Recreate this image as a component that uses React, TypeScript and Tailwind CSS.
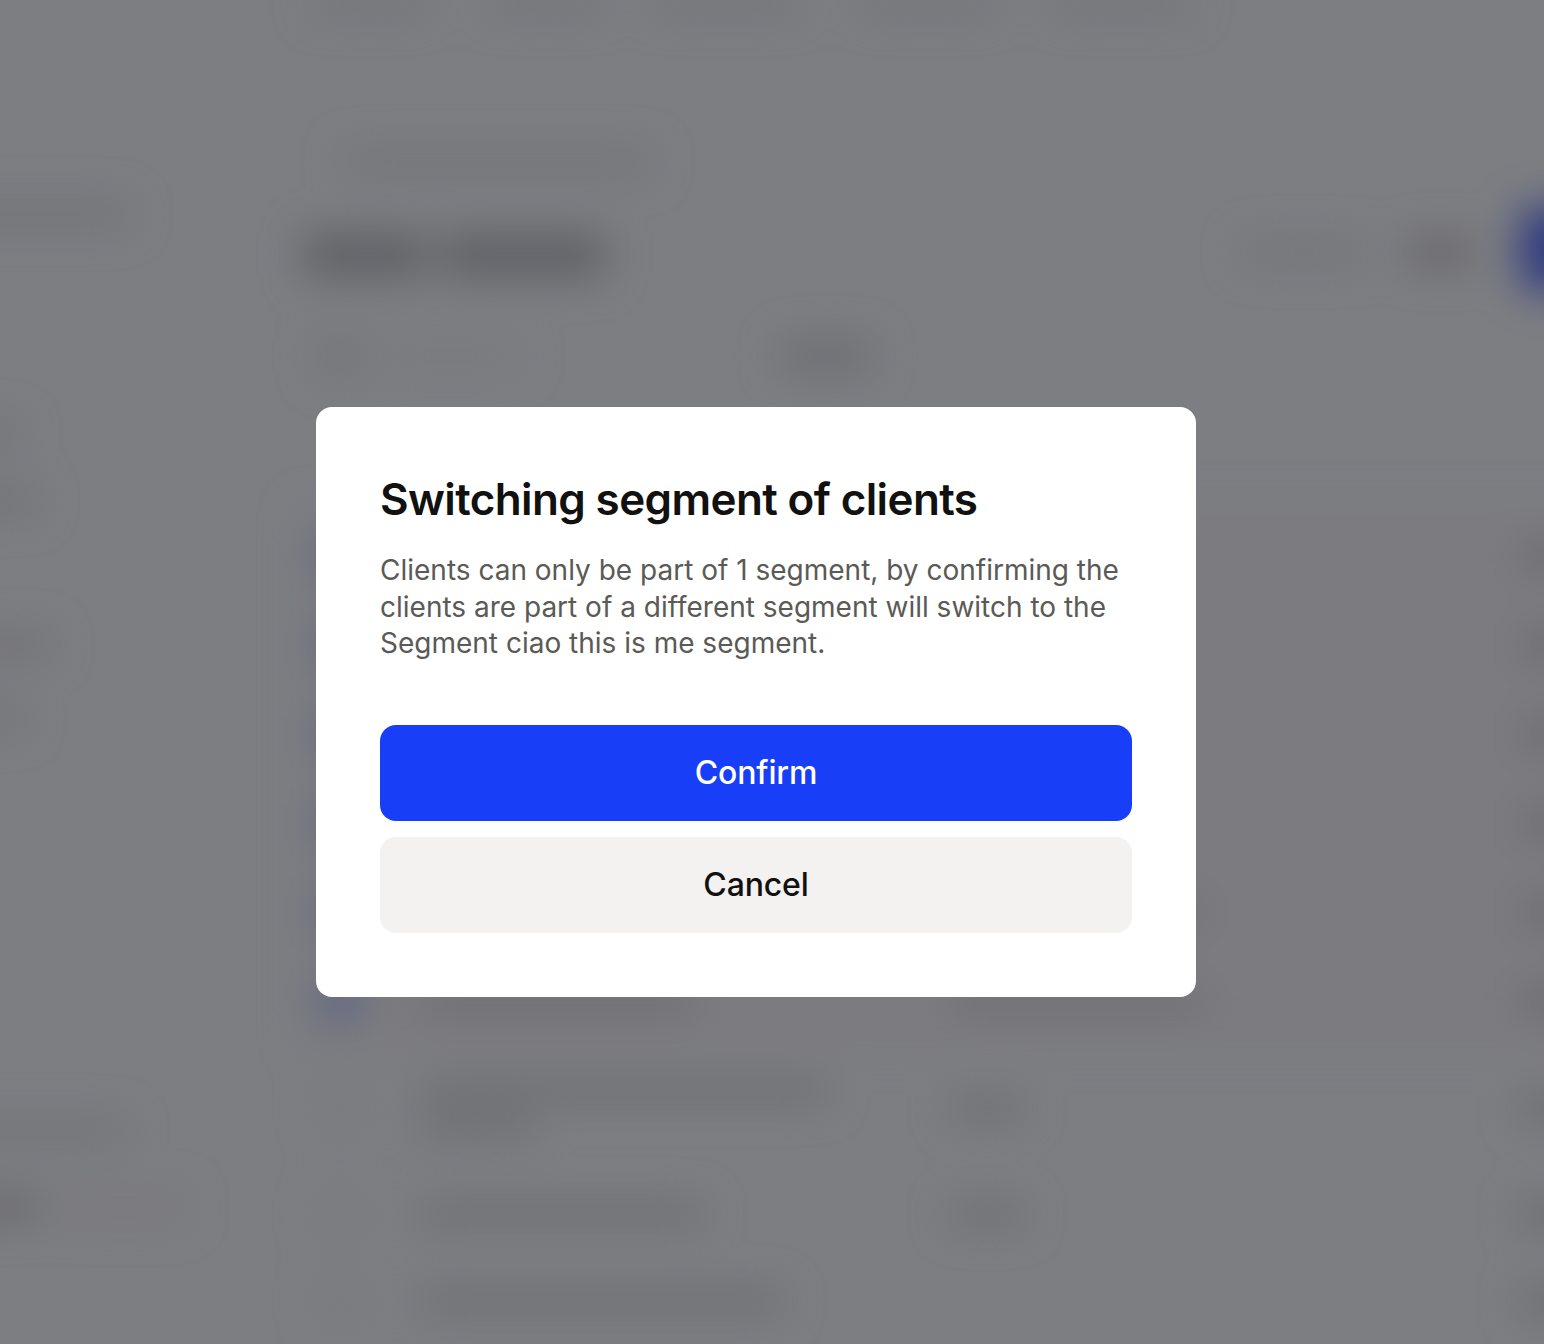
import { useState, type ReactNode } from "react";

interface BarProps {
  className: string;
}

interface TableRow {
  id: string;
  height: string;
  selected: boolean;
  name: string[];
  segment: string | null;
}

const SIDEBAR_ITEMS = [
  { id: "account", className: "mt-[204px] h-5 w-[208px] bg-[#6f7074]" },
  { id: "home", className: "mt-[201px] h-5 w-[98px] bg-[#6f7074]" },
  { id: "clients", className: "mt-[46px] h-5 w-[116px] bg-[#6d6e72]" },
  { id: "segments", className: "mt-[124px] h-5 w-[130px] bg-[#6f6e72]" },
  { id: "reports", className: "mt-[52px] h-5 w-[102px] bg-[#6f7074]" },
  { id: "settings", className: "mt-[394px] h-5 w-[205px] bg-[#707175]" },
];

const TABS = [
  { id: "tab-1", className: "ml-2 w-[116px]" },
  { id: "tab-2", className: "ml-[60px] w-[116px]" },
  { id: "tab-3", className: "ml-[48px] w-[148px]" },
  { id: "tab-4", className: "ml-[60px] w-[136px]" },
  { id: "tab-5", className: "ml-[56px] w-[140px]" },
];

const ROWS: TableRow[] = [
  { id: "r1", height: "h-[89px]", selected: true, name: ["w-[270px]"], segment: "w-[120px]" },
  { id: "r2", height: "h-[89px]", selected: true, name: ["w-[270px]"], segment: "w-[120px]" },
  { id: "r3", height: "h-[89px]", selected: true, name: ["w-[270px]"], segment: "w-[120px]" },
  { id: "r4", height: "h-[89px]", selected: true, name: ["w-[270px]"], segment: "w-[120px]" },
  { id: "r5", height: "h-[89px]", selected: true, name: ["w-[270px]"], segment: "w-[250px]" },
  { id: "r6", height: "h-[89px]", selected: true, name: ["w-[270px]"], segment: "w-[250px]" },
  { id: "r7", height: "h-[125px]", selected: false, name: ["w-[404px]", "w-[110px]"], segment: "w-[70px]" },
  { id: "r8", height: "h-[87px]", selected: false, name: ["w-[280px]"], segment: "w-[70px]" },
  { id: "r9", height: "h-[87px]", selected: false, name: ["w-[360px]"], segment: null },
];

function Bar({ className }: BarProps): ReactNode {
  return <div className={`shrink-0 ${className}`} />;
}

function Sidebar(): ReactNode {
  return (
    <div className="flex w-[384px] shrink-0 flex-col">
      {SIDEBAR_ITEMS.map((item) => (
        <Bar key={item.id} className={item.className} />
      ))}
      <div className="mt-[54px] flex">
        <Bar className="h-6 w-[120px] bg-[#67666a]" />
        <Bar className="ml-6 h-6 w-[120px] bg-[#7a787c]" />
      </div>
    </div>
  );
}

function Header(): ReactNode {
  return (
    <>
      <div className="flex h-[133px] items-start">
        {TABS.map((tab) => (
          <Bar key={tab.id} className={`h-2.5 bg-[#6a6b6f] ${tab.className}`} />
        ))}
      </div>
      <div className="flex h-[60px] items-center">
        <Bar className="ml-[42px] h-5 w-[304px] bg-[#717276]" />
      </div>
      <div className="flex h-[116px] items-center pt-2.5">
        <Bar className="h-11 w-[122px] bg-[#606165]" />
        <Bar className="ml-4 h-11 w-[162px] bg-[#606165]" />
        <Bar className="mb-1.5 ml-[640px] h-5 w-[120px] bg-[#717276]" />
        <Bar className="mb-1.5 ml-11 h-7 w-[66px] bg-[#68666a]" />
        <Bar className="mb-3 ml-[46px] h-[84px] w-[200px] rounded-2xl bg-[#303b80]" />
      </div>
      <div className="flex h-[95px] items-center pt-0.5">
        <Bar className="ml-4 h-9 w-10 bg-[#737478]" />
        <Bar className="ml-5 h-5 w-[140px] bg-[#7a7a7e]" />
        <Bar className="ml-[262px] h-7 w-[88px] bg-[#6a6b6f]" />
      </div>
    </>
  );
}

function ClientRow({ row }: { row: TableRow }): ReactNode {
  return (
    <div className={`flex items-center ${row.height} ${row.selected ? "bg-[#7c7b7f]" : ""}`}>
      <Bar className={`ml-4 size-10 rounded ${row.selected ? "bg-[#5c6584]" : "bg-[#7b7b7f]"}`} />
      <div className="ml-[62px] flex w-[530px] shrink-0 flex-col gap-4">
        {row.name.map((width) => (
          <Bar key={width} className={`h-5 bg-[#6a6b6f] ${width}`} />
        ))}
      </div>
      <div className="w-[570px] shrink-0">
        {row.segment ? <Bar className={`h-5 bg-[#6b6b6f] ${row.segment}`} /> : null}
      </div>
      <Bar className="h-6 w-[120px] bg-[#69696d]" />
    </div>
  );
}

function ClientsPage(): ReactNode {
  return (
    <div aria-hidden="true" className="-ml-20 flex h-full w-[1824px] blur-[20px]">
      <Sidebar />
      <div className="flex flex-1 flex-col">
        <Header />
        <div className="mt-[109px] flex flex-col">
          {ROWS.map((row) => (
            <ClientRow key={row.id} row={row} />
          ))}
        </div>
      </div>
    </div>
  );
}

interface ConfirmDialogProps {
  title: string;
  description: string;
  onConfirm: () => void;
  onCancel: () => void;
}

function ConfirmDialog({ title, description, onConfirm, onCancel }: ConfirmDialogProps): ReactNode {
  return (
    <div
      role="dialog"
      aria-modal="true"
      aria-labelledby="dialog-title"
      className="w-[880px] rounded-2xl bg-white p-16"
    >
      <h2
        id="dialog-title"
        className="text-[44px] leading-[1.3] font-semibold tracking-[-0.014em] text-[#111110]"
      >
        {title}
      </h2>
      <p className="mt-6 text-[28px] leading-[1.3] text-[#5a5a56]">{description}</p>
      <div className="mt-16 flex flex-col gap-4">
        <button
          type="button"
          onClick={onConfirm}
          className="h-24 rounded-2xl bg-[#183ef7] text-[32px] font-medium tracking-[-0.005em] text-white"
        >
          Confirm
        </button>
        <button
          type="button"
          onClick={onCancel}
          className="h-24 rounded-2xl bg-[#f3f2f0] text-[32px] font-medium tracking-[-0.005em] text-[#111110]"
        >
          Cancel
        </button>
      </div>
    </div>
  );
}

export default function App() {
  const [open, setOpen] = useState(true);
  const close = () => setOpen(false);

  return (
    <div className="relative h-[1344px] w-[1544px] overflow-hidden bg-[#7d7e82] font-['Inter',sans-serif]">
      <ClientsPage />
      {open ? (
        <div className="absolute inset-0 flex items-start pt-[407px] pl-[316px]">
          <ConfirmDialog
            title="Switching segment of clients"
            description="Clients can only be part of 1 segment, by confirming the clients are part of a different segment will switch to the Segment ciao this is me segment."
            onConfirm={close}
            onCancel={close}
          />
        </div>
      ) : null}
    </div>
  );
}
